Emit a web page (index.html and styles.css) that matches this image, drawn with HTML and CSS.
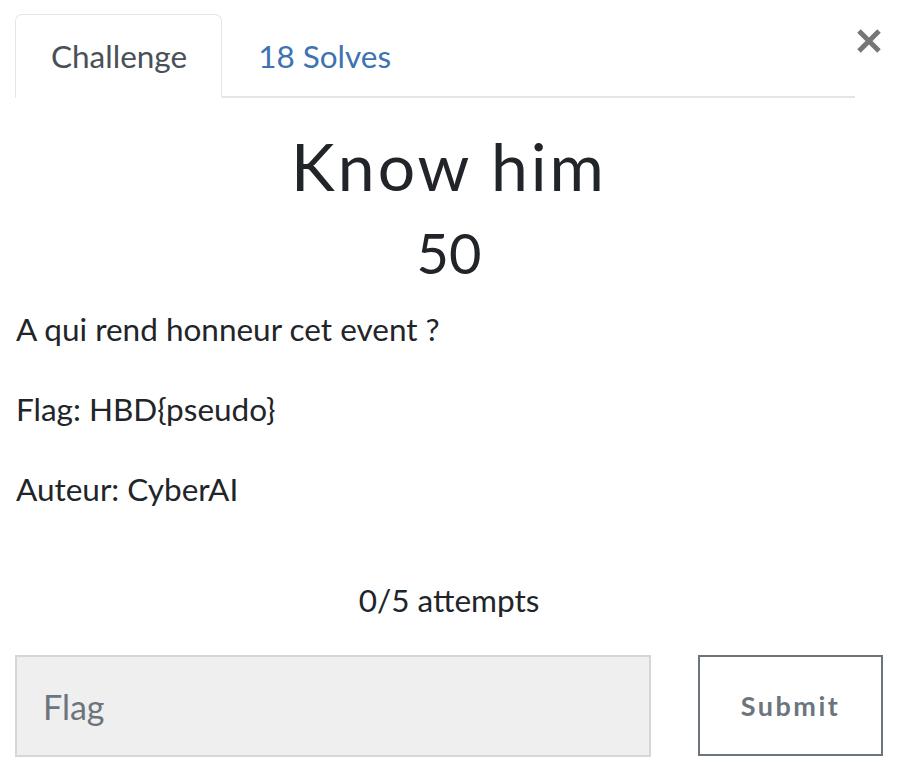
FILE: index.html
```html
<!DOCTYPE html>
<html lang="fr">
<head>
<meta charset="utf-8">
<title>Know him</title>
<link rel="stylesheet" href="styles.css">
</head>
<body>
<div class="modal">
  <div class="head">
    <ul class="tabs">
      <li class="tab active">Challenge</li>
      <li class="tab"><a href="#solves">18 Solves</a></li>
    </ul>
    <button class="close" aria-label="Close">
      <svg width="26" height="26" viewBox="0 0 26 26"><path d="M3 3 L23 23 M23 3 L3 23" stroke="#767676" stroke-width="5" stroke-linecap="butt"/></svg>
    </button>
  </div>
  <div class="content">
    <h2 class="name">Know him</h2>
    <h3 class="value">50</h3>
    <div class="desc">
      <p>A qui rend honneur cet event ?</p>
      <p>Flag: HBD{pseudo}</p>
      <p>Auteur: CyberAI</p>
    </div>
    <p class="attempts">0/5 attempts</p>
    <div class="submit-row">
      <input class="flag" type="text" placeholder="Flag">
      <button class="submit">Submit</button>
    </div>
  </div>
</div>
</body>
</html>
```

FILE: styles.css
```css
html, body {
  margin: 0;
  padding: 0;
  background: #ffffff;
}
body {
  font-family: Lato, "Noto Sans", sans-serif;
  color: #212529;
}
.modal {
  padding: 14px 21px 0 15px;
}
.head {
  display: flex;
  align-items: flex-start;
}
.tabs {
  flex: 0 0 840px;
  display: flex;
  list-style: none;
  margin: 0;
  padding: 0;
  border-bottom: 2px solid #e3e6e9;
}
.tab {
  font-size: 31.5px;
  line-height: 42px;
  padding: 20px 34px 20px 35px;
  border: 1.5px solid transparent;
  border-top-left-radius: 7px;
  border-top-right-radius: 7px;
  margin-bottom: -2px;
}
.tab.active {
  color: #495057;
  border-color: #e3e6e9 #e3e6e9 #ffffff;
  background: #fff;
}
.tab a {
  color: #3d73b1;
  text-decoration: none;
}
.close {
  margin: 14px 0 0 0;
  padding: 0;
  border: 0;
  background: none;
  width: 28px;
  height: 26px;
  display: flex;
  justify-content: center;
}
.content {
  text-align: center;
}
.name {
  font-weight: 400;
  font-size: 66px;
  line-height: 80px;
  letter-spacing: 3px;
  margin: 28px 0 0;
}
.value {
  font-weight: 400;
  font-size: 56px;
  line-height: 68px;
  margin: 13px 0 0;
}
.desc {
  text-align: left;
  font-size: 31.5px;
  line-height: 44px;
  margin-top: 20px;
}
.desc p {
  margin: 0 0 36px;
  padding-left: 1px;
}
.attempts {
  font-size: 31.5px;
  line-height: 44px;
  margin: 67px 0 0;
}
.submit-row {
  display: flex;
  gap: 47px;
  margin-top: 33px;
}
.flag {
  flex: 0 0 636px;
  box-sizing: border-box;
  height: 102px;
  background: #efefef;
  border: 2px solid #d3d7db;
  border-radius: 0;
  padding: 0 26px;
  font-family: Lato, sans-serif;
  font-size: 34px;
  color: #495057;
  outline: none;
}
.flag::placeholder {
  color: #6c757d;
}
.submit {
  flex: 0 0 185px;
  box-sizing: border-box;
  height: 101px;
  background: #fff;
  border: 2px solid #6c757d;
  border-radius: 0;
  font-family: Lato, sans-serif;
  font-weight: 700;
  font-size: 27px;
  letter-spacing: 2.5px;
  color: #6c757d;
}
```
